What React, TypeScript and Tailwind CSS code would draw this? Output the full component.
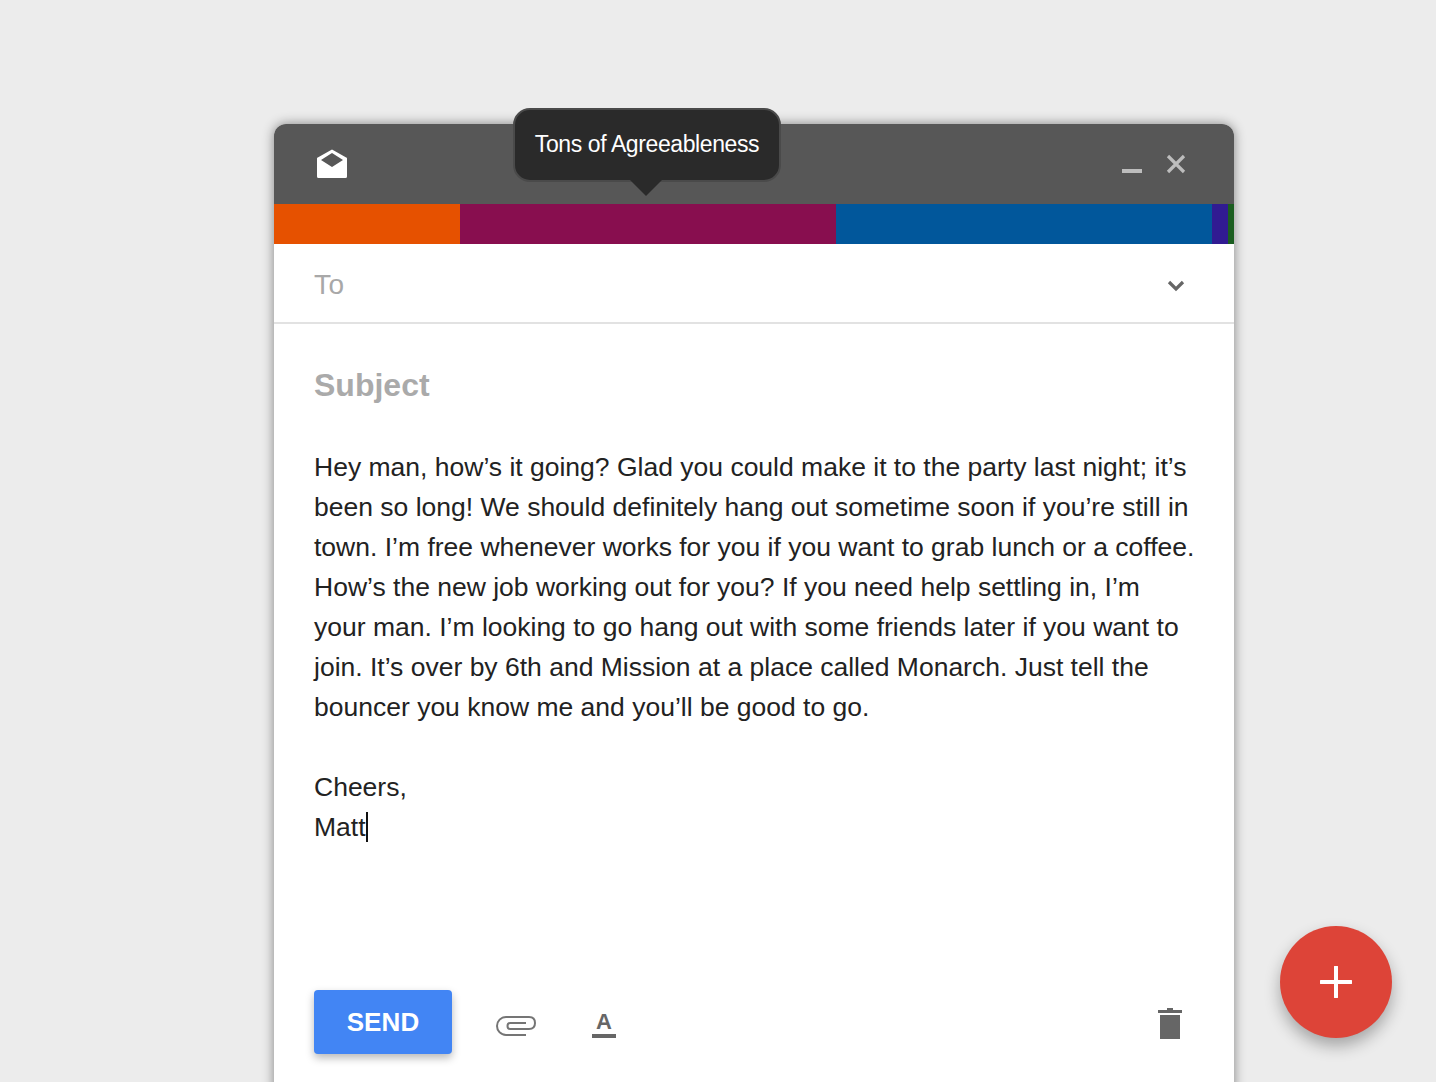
const segments = [
  { className: 'w-[186px] bg-[#e65100]' },
  { className: 'w-[376px] bg-[#880e4f]' },
  { className: 'w-[376px] bg-[#01579b]' },
  { className: 'w-[16px] bg-[#311b92]' },
  { className: 'w-[6px] bg-[#1b5e20]' },
]

const lines = [
  'Hey man, how’s it going? Glad you could make it to the party last night; it’s',
  'been so long! We should definitely hang out sometime soon if you’re still in',
  'town. I’m free whenever works for you if you want to grab lunch or a coffee.',
  'How’s the new job working out for you? If you need help settling in, I’m',
  'your man. I’m looking to go hang out with some friends later if you want to',
  'join. It’s over by 6th and Mission at a place called Monarch. Just tell the',
  'bouncer you know me and you’ll be good to go.',
]

function MailOpenIcon() {
  return (
    <svg width="30" height="30" viewBox="0 0 30 30" className="block">
      <path
        fill="#fff"
        fillRule="evenodd"
        d="M15 0.5 L29.2 8.6 a1 1 0 0 1 .8 1 V27.5 a1.5 1.5 0 0 1 -1.5 1.5 H1.5 a1.5 1.5 0 0 1 -1.5 -1.5 V9.6 a1 1 0 0 1 .8 -1 Z M15 4 L4 11 L15 18 L26 11 Z"
      />
    </svg>
  )
}

function PaperclipIcon() {
  return (
    <svg width="40" height="20" viewBox="0 0 40 20" fill="none" stroke="#757575" strokeWidth="2" className="block">
      <path d="M30 19 H10 C4.500 19 1 14.500 1 10 C1 5 5 1 10 1 H33 C37 1 39 3.500 39 7 C39 10.500 37 13 33 13 H14 C12.500 13 11.500 12 11.500 10 C11.500 8 12.500 7 14 7 H30" />
    </svg>
  )
}

function TrashIcon() {
  return (
    <svg width="24" height="32" viewBox="0 0 24 32" className="block">
      <path fill="#666" d="M9 0 H15 V2 H24 V5 H0 V2 H9 Z M2 7 H22 V31 H2 Z" />
    </svg>
  )
}

export default function App() {
  return (
    <div className="relative h-[1082px] overflow-hidden bg-[#ececec] pl-[274px] pt-[124px] font-['Liberation_Sans',Arial,sans-serif]">
      <div className="relative h-[1100px] w-[960px] rounded-t-[12px] bg-white shadow-[0_0_12px_rgba(0,0,0,0.45)]">
        <div className="flex h-[80px] items-center justify-between rounded-t-[12px] bg-[#575757] pl-[43px] pr-[48px]">
          <MailOpenIcon />
          <div className="flex items-center gap-[24px]">
            <span className="mt-[14px] h-[4px] w-[20px] bg-[#bdbdbd]" />
            <svg width="20" height="20" viewBox="0 0 20 20" className="block">
              <path d="M2 2 L18 18 M18 2 L2 18" stroke="#bdbdbd" strokeWidth="3.200" />
            </svg>
          </div>
        </div>

        <div className="flex h-[40px]">
          {segments.map((s, i) => (
            <div key={i} className={s.className} />
          ))}
        </div>

        <div className="absolute left-[239px] top-[-16px] flex h-[74px] w-[268px] justify-center rounded-[17px] border-2 border-[#4a4a4a] bg-[#2a2a2a] pt-[19px] text-[23px] leading-[30px] tracking-[-0.4px] text-white">
          Tons of Agreeableness
        </div>
        <div className="absolute left-[356px] top-[56px] size-0 border-x-[16px] border-t-[16px] border-x-transparent border-t-[#2a2a2a]" />

        <div className="flex h-[80px] items-center justify-between border-b-2 border-[#e2e2e2] pl-[40px] pr-[49px]">
          <span className="mt-[4px] text-[28px] tracking-[0.5px] text-[#a8a8a8]">To</span>
          <svg width="18" height="12" viewBox="0 0 18 12" className="mt-[6px] block">
            <path d="M2 2 L9 9 L16 2" fill="none" stroke="#666" strokeWidth="3.200" />
          </svg>
        </div>

        <div className="px-[40px] pt-[41px] text-[26.5px] leading-[40px] text-[#222]">
          <div className="text-[32px] font-bold text-[#aaa]">Subject</div>
          <div className="mt-[42px] whitespace-nowrap">
            {lines.map((line) => (
              <div key={line}>{line}</div>
            ))}
            <div className="mt-[40px]">Cheers,</div>
            <div className="flex items-center">
              Matt
              <span className="h-[30px] w-[2px] bg-[#111]" />
            </div>
          </div>
        </div>

        <div className="absolute left-[40px] right-[52px] top-[866px] flex items-center">
          <div className="flex h-[64px] w-[138px] items-center justify-center rounded-[4px] bg-[#4285f4] text-[26px] font-bold tracking-[0.1px] text-white shadow-[0_4px_8px_rgba(0,0,0,0.28)]">
            SEND
          </div>
          <div className="ml-[44px] mt-[8px]">
            <PaperclipIcon />
          </div>
          <div className="ml-[56px] mt-[4px] flex w-[24px] flex-col items-center">
            <span className="text-[22px] leading-[22px] font-bold text-[#666]">A</span>
            <span className="mt-[1px] h-[4px] w-[24px] bg-[#666]" />
          </div>
          <div className="ml-auto mt-[4px]">
            <TrashIcon />
          </div>
        </div>
      </div>

      <div className="absolute left-[1280px] top-[926px] flex size-[112px] items-center justify-center rounded-full bg-[#dd4438] shadow-[0_8px_16px_rgba(0,0,0,0.3)]">
        <svg width="32" height="32" viewBox="0 0 32 32" className="block">
          <path d="M16 1 V31 M1 16 H31" stroke="#fff" strokeWidth="4" strokeLinecap="round" />
        </svg>
      </div>
    </div>
  )
}
